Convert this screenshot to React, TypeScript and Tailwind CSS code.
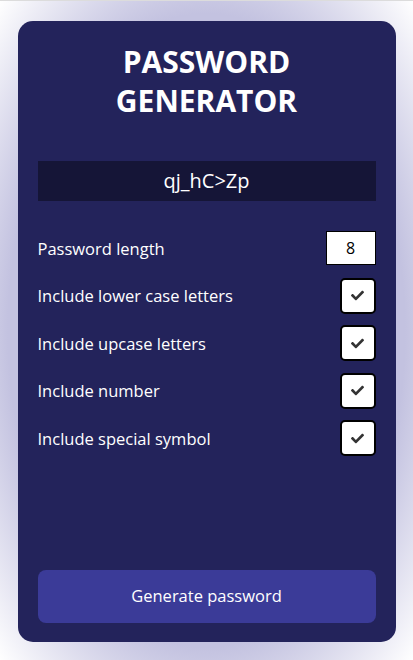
import React, { useState } from "react";
import { FaCheck } from "react-icons/fa";

const options = [
  "Include lower case letters",
  "Include upcase letters",
  "Include number",
  "Include special symbol",
];

export default function App() {
  const [length, setLength] = useState(8);
  const [checked, setChecked] = useState([true, true, true, true]);

  const toggle = (index: number) => {
    setChecked((prev) => prev.map((v, i) => (i === index ? !v : v)));
  };

  return (
    <div
      className="min-h-[660px] w-full border-t border-[#dcdcdc] bg-[radial-gradient(ellipse_at_center,#c3c2e0_68%,#ffffff_100%)] pt-[20px]"
      style={{ fontFamily: '"Open Sans", "Noto Sans", sans-serif' }}
    >
      <div className="mx-auto flex h-[621px] w-[378px] flex-col rounded-[15px] bg-[#23235b] px-[20px] pt-[21px] pb-[19px] text-white">
        <h1 className="text-center text-[30px] leading-[39px] font-bold">
          PASSWORD
          <br />
          GENERATOR
        </h1>

        <div className="mt-[41px] flex h-[40px] items-center justify-center bg-[#151537] text-[20px]">
          qj_hC&gt;Zp
        </div>

        <div className="mt-[29px] flex flex-col gap-[11.5px]">
          <div className="flex h-[36px] items-center justify-between pt-[2px]">
            <label className="text-[16.5px]">Password length</label>
            <input
              type="number"
              value={length}
              onChange={(e) => setLength(Number(e.target.value))}
              className="mt-[-2px] h-[34px] w-[50px] border border-black bg-white p-0 text-center text-[16px] text-black outline-0 [appearance:textfield] [&::-webkit-inner-spin-button]:appearance-none [&::-webkit-outer-spin-button]:appearance-none"
            />
          </div>

          {options.map((label, index) => (
            <div key={label} className="flex h-[36px] items-center justify-between pt-[2px]">
              <label className="text-[16.5px]">{label}</label>
              <button
                type="button"
                onClick={() => toggle(index)}
                className="mt-[-2px] flex h-[36px] w-[36px] items-center justify-center rounded-[5px] border-2 border-black bg-white text-[#333]"
              >
                {checked[index] && <FaCheck className="h-[13px] w-[13px]" />}
              </button>
            </div>
          ))}
        </div>

        <button
          type="button"
          className="mt-auto h-[53px] w-full rounded-[8px] bg-[#3b3b98] text-[16.5px] text-white"
        >
          Generate password
        </button>
      </div>
    </div>
  );
}
